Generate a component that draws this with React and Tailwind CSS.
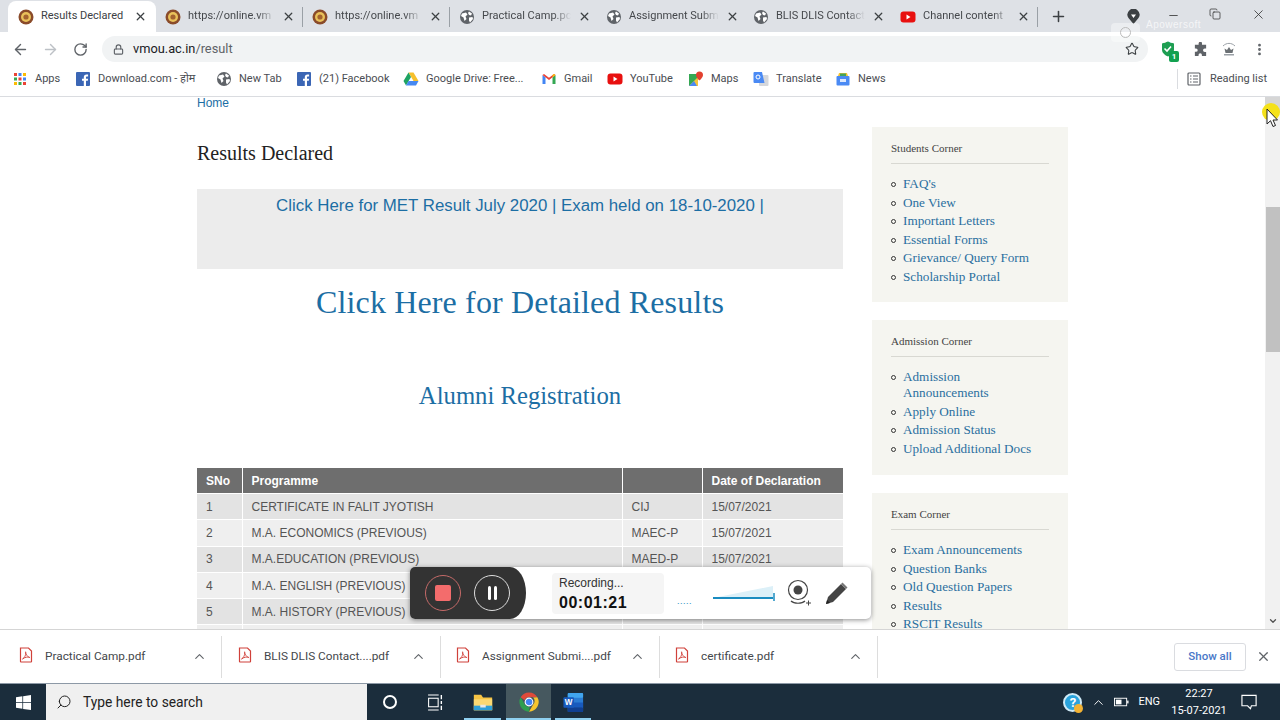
import { ArrowLeft, ArrowRight, RotateCw, Lock, Star, MoreVertical, X, Plus, Minus, ChevronUp, Search, Copy, ChevronDown } from "lucide-react";

const tabs = [
  { title: "Results Declared", icon: "seal", active: true },
  { title: "https://online.vm", icon: "seal" },
  { title: "https://online.vm", icon: "seal" },
  { title: "Practical Camp.pc", icon: "globe" },
  { title: "Assignment Subm", icon: "globe" },
  { title: "BLIS DLIS Contact", icon: "globe" },
  { title: "Channel content", icon: "yt" },
];

const bookmarks = [
  { label: "Download.com - होम", icon: "fb", w: "w-[141px]" },
  { label: "New Tab", icon: "globe", w: "w-[80px]" },
  { label: "(21) Facebook", icon: "fb", w: "w-[107px]" },
  { label: "Google Drive: Free...", icon: "drive", w: "w-[138px]" },
  { label: "Gmail", icon: "gmail", w: "w-[66px]" },
  { label: "YouTube", icon: "yt", w: "w-[81px]" },
  { label: "Maps", icon: "maps", w: "w-[65px]" },
  { label: "Translate", icon: "translate", w: "w-[82px]" },
  { label: "News", icon: "news", w: "w-[60px]" },
];

const rows = [
  ["1", "CERTIFICATE IN FALIT JYOTISH", "CIJ", "15/07/2021"],
  ["2", "M.A. ECONOMICS (PREVIOUS)", "MAEC-P", "15/07/2021"],
  ["3", "M.A.EDUCATION (PREVIOUS)", "MAED-P", "15/07/2021"],
  ["4", "M.A. ENGLISH (PREVIOUS)", "", ""],
  ["5", "M.A. HISTORY (PREVIOUS)", "", ""],
  ["", "", "", ""],
];

const corners = [
  { title: "Students Corner", h: "h-[175px]", links: ["FAQ's", "One View", "Important Letters", "Essential Forms", "Grievance/ Query Form", "Scholarship Portal"] },
  { title: "Admission Corner", h: "h-[155px]", links: ["Admission Announcements", "Apply Online", "Admission Status", "Upload Additional Docs"] },
  { title: "Exam Corner", h: "h-[180px]", links: ["Exam Announcements", "Question Banks", "Old Question Papers", "Results", "RSCIT Results"] },
];

const downloads = [
  { name: "Practical Camp.pdf", w: "w-[222px]", pl: "pl-[19px]" },
  { name: "BLIS DLIS Contact....pdf", w: "w-[219px]", pl: "pl-[16px]" },
  { name: "Assignment Submi....pdf", w: "w-[219px]", pl: "pl-[15px]" },
  { name: "certificate.pdf", w: "w-[218px]", pl: "pl-[15px]" },
];

const SiteIcon = ({ type }) => {
  if (type === "seal")
    return (
      <svg viewBox="0 0 16 16" className="w-4 h-4 shrink-0">
        <circle cx="8" cy="8" r="7.5" fill="#8a4b2a" />
        <circle cx="8" cy="8" r="5" fill="#e9c15a" />
        <circle cx="8" cy="8" r="2.6" fill="#a4632f" />
      </svg>
    );
  if (type === "globe")
    return (
      <svg viewBox="0 0 16 16" className="w-4 h-4 shrink-0">
        <circle cx="8" cy="8" r="7" fill="#5f6368" />
        <path d="M3 4.500 7 3.500 8.500 5.500 6.500 7.500 7.500 10 5.500 12 4.500 8.500 2 7zM10 2.500l3 2-1 2-2-.5-1-2zM10 8.500l3.500-.5.5 2-3 3.500-1-2z" fill="#fff" />
      </svg>
    );
  if (type === "yt")
    return (
      <svg viewBox="0 0 16 16" className="w-4 h-4 shrink-0">
        <rect x="0.5" y="2.5" width="15" height="11" rx="3" fill="#e8100f" />
        <path d="M6.5 5.5 10.5 8l-4 2.500z" fill="#fff" />
      </svg>
    );
  if (type === "fb")
    return (
      <svg viewBox="0 0 16 16" className="w-4 h-4 shrink-0">
        <rect x="1" y="1" width="14" height="14" rx="1" fill="#3b66b5" />
        <path d="M11 15V9.800h1.800l.3-2.100H11V6.400c0-.6.2-1 1-1h1.100V3.500c-.2 0-.9-.1-1.600-.1-1.600 0-2.700 1-2.700 2.800v1.500H7v2.100h1.800V15z" fill="#fff" />
      </svg>
    );
  if (type === "drive")
    return (
      <svg viewBox="0 0 16 16" className="w-4 h-4 shrink-0">
        <path d="M5.500 1.500h5L15.500 10h-5z" fill="#f6c02c" />
        <path d="M5.500 1.500 0.500 10l2.500 4.500L8 6z" fill="#1ea362" />
        <path d="M3 14.500h10l2.500-4.500h-10z" fill="#4688f1" />
      </svg>
    );
  if (type === "gmail")
    return (
      <svg viewBox="0 0 16 16" className="w-4 h-4 shrink-0">
        <path d="M1.500 13V4l3 2.300V13z" fill="#4285f4" />
        <path d="M11.500 13V6.300l3-2.300v9z" fill="#34a853" />
        <path d="M1.500 4 8 9l6.500-5-1.500-1-5 3.800L3 3z" fill="#ea4335" />
        <path d="M11.500 6.300 14.500 4l-1.500-1-1.500 1.100z" fill="#fbbc04" />
      </svg>
    );
  if (type === "maps")
    return (
      <svg viewBox="0 0 16 16" className="w-4 h-4 shrink-0">
        <path d="M1 3h9v12H1z" fill="#35a853" />
        <path d="M1 15 10 6v9z" fill="#f5c33b" />
        <path d="M1 15 6 10l3 5z" fill="#4a8af4" />
        <path d="M11.500 0.500a3.500 3.500 0 0 1 3.500 3.500c0 2.500-3.500 5.500-3.500 5.500S8 6.500 8 4a3.500 3.500 0 0 1 3.500-3.500z" fill="#e2402f" />
      </svg>
    );
  if (type === "translate")
    return (
      <svg viewBox="0 0 16 16" className="w-4 h-4 shrink-0">
        <rect x="6" y="4" width="9.500" height="11" rx="1" fill="#d5d7db" />
        <path d="M1.500 1h7.500l2.500 11h-10a1 1 0 0 1-1-1V2a1 1 0 0 1 1-1z" fill="#4a8af4" />
        <circle cx="5" cy="6" r="2" fill="none" stroke="#fff" strokeWidth="1" />
      </svg>
    );
  return (
    <svg viewBox="0 0 16 16" className="w-4 h-4 shrink-0">
      <rect x="1.500" y="5" width="13" height="9.500" rx="1" fill="#4a8af4" />
      <path d="M3 5 4 2h8l1 3z" fill="#f4c430" />
      <path d="M5 2.500h6V5H5z" fill="#43a35c" />
      <rect x="5" y="8" width="6" height="3" fill="#fff" opacity="0.8" />
    </svg>
  );
};

const AppsIcon = () => (
  <svg viewBox="0 0 14 14" className="w-[14px] h-[14px]">
    {[1, 5.5, 10].map((y, r) =>
      [1, 5.5, 10].map((x, c) => (
        <rect key={`${r}-${c}`} x={x} y={y} width="3" height="3" fill={["#ea4335", "#4285f4", "#fbbc04", "#34a853"][(r * 3 + c) % 4]} />
      ))
    )}
  </svg>
);

const PdfIcon = () => (
  <svg viewBox="0 0 14 16" className="w-[14px] h-4 shrink-0 -mt-[3px]">
    <path d="M1.500 1h8l3 3v10.500a.5.5 0 0 1-.5.500H2a.5.5 0 0 1-.5-.500z" fill="#fff" stroke="#d0413a" strokeWidth="1.200" />
    <path d="M3.500 12c2-1 3.500-4 3.300-6.500C6.700 4 6 5 7 7c1 1.800 2.500 3.500 3.800 3.500C10 9.500 6 10 3.500 12z" fill="none" stroke="#d0413a" strokeWidth="0.900" />
  </svg>
);

const ChromeIcon = () => (
  <svg viewBox="0 0 24 24" className="w-[22px] h-[22px]">
    <path d="M12 1.500a10.500 10.500 0 0 1 9.100 5.250H12A5.250 5.250 0 0 0 7.200 10L2.900 6.800A10.500 10.500 0 0 1 12 1.500z" fill="#e04a3a" />
    <path d="M21.100 6.750A10.500 10.500 0 0 1 12 22.500l4.500-7.900A5.250 5.250 0 0 0 16.500 7z" fill="#f7c52d" />
    <path d="M12 22.500A10.500 10.500 0 0 1 2.900 6.800l4.500 7.900a5.250 5.250 0 0 0 5.200 2.500z" fill="#2f9e4f" />
    <circle cx="12" cy="12" r="4.200" fill="#4285f4" stroke="#fff" strokeWidth="1.200" />
  </svg>
);

const WordIcon = () => (
  <svg viewBox="0 0 24 24" className="w-[23px] h-[23px]">
    <rect x="6" y="2" width="16" height="20" rx="1" fill="#2b7cd3" />
    <rect x="6" y="2" width="16" height="5" rx="1" fill="#41a5ee" />
    <rect x="6" y="12" width="16" height="5" fill="#185abd" />
    <rect x="6" y="17" width="16" height="5" rx="1" fill="#103f91" />
    <rect x="1.500" y="6.500" width="11" height="11" rx="1" fill="#185abd" />
    <text x="7" y="15" textAnchor="middle" fontSize="8.5" fontWeight="700" fill="#fff" fontFamily="Liberation Sans, sans-serif">W</text>
  </svg>
);

const FolderIcon = () => (
  <svg viewBox="0 0 24 24" className="w-[22px] h-[22px]">
    <path d="M2 4h8l2 3h10v14H2z" fill="#f6c445" />
    <path d="M2 9h20v12H2z" fill="#fbd872" />
    <rect x="2" y="16" width="20" height="5" fill="#2f9fd8" />
    <rect x="9" y="15" width="6" height="3" fill="#e8e8e8" />
  </svg>
);

function Tab({ tab }) {
  if (tab.active) {
    return (
      <div className="relative w-[148px] h-[31px] bg-white rounded-t-lg flex items-center pl-[10px] pr-[9px] gap-[7px]">
        <SiteIcon type={tab.icon} />
        <span className="flex-1 whitespace-nowrap text-[11px] text-[#3c4043]">{tab.title}</span>
        <X size={13} strokeWidth={2.4} className="text-[#3c4043] shrink-0" />
      </div>
    );
  }
  return (
    <div className="w-[147px] h-[31px] flex items-center pl-[9px] pr-[11px] gap-[7px]">
      <SiteIcon type={tab.icon} />
      <span className="flex-1 whitespace-nowrap text-[11px] text-[#45484c] [mask-image:linear-gradient(to_right,black_80%,transparent)]">{tab.title}</span>
      <X size={13} strokeWidth={2.4} className="text-[#3c4043] shrink-0" />
      <span className="block w-px h-5 bg-[#9aa0a6] -mr-[11px]" />
    </div>
  );
}

function TopBars() {
  return (
    <div className="shrink-0 font-['Roboto',sans-serif]">
      {/* tab strip */}
      <div className="relative h-8 bg-[#dee1e6] flex items-end pl-2">
        {tabs.map((tab, i) => (
          <Tab key={i} tab={tab} />
        ))}
        <Plus size={17} strokeWidth={2.2} className="text-[#3c4043] ml-[12px] mb-[7px]" />
        <div className="flex-1" />
        <svg viewBox="0 0 14 16" className="w-[15px] h-[16px] mb-[7px] mr-[26px]">
          <path d="M7 15 2 9a6 6 0 1 1 10 0z" fill="#3c4043" />
          <path d="M4.500 5.500h5L7 9z" fill="#fff" />
        </svg>
        <Minus size={13} strokeWidth={1.5} className="text-[#333] mb-[10px] mr-[29px]" />
        <Copy size={12} strokeWidth={1.5} className="text-[#333] mb-[12px] mr-[30px]" />
        <X size={15} strokeWidth={1.3} className="text-[#333] mb-[10px] mr-[14px]" />
      </div>

      {/* toolbar */}
      <div className="h-[33px] pt-px bg-white flex items-center pl-[12px]">
        <ArrowLeft size={17} strokeWidth={2} className="text-[#5f6368]" />
        <ArrowRight size={17} strokeWidth={2} className="text-[#bdc1c6] ml-[13px]" />
        <RotateCw size={15} strokeWidth={2.2} className="text-[#5f6368] ml-[14px]" />
        <div className="ml-[14px] w-[1046px] h-[26px] rounded-full bg-[#f1f3f4] flex items-center pl-[11px] pr-[9px]">
          <Lock size={11} strokeWidth={2.5} className="text-[#5f6368]" />
          <span className="ml-[9px] text-[12.8px] text-[#202124]">vmou.ac.in</span>
          <span className="text-[12.8px] text-[#5f6368]">/result</span>
          <div className="flex-1" />
          <Star size={14} strokeWidth={1.8} className="text-[#3c4043]" />
        </div>
        <div className="relative ml-[12px] w-4 h-4">
          <svg viewBox="0 0 16 16" className="w-4 h-4">
            <path d="M8 0.500 14 2.500v6c0 3.500-3 5.800-6 7-3-1.200-6-3.500-6-7v-6z" fill="#1e9e52" />
            <path d="M4.500 7.500 7 10l4-4.500" fill="none" stroke="#fff" strokeWidth="1.600" />
          </svg>
          <span className="absolute -right-[3px] -bottom-[5px] w-[10px] h-[11px] bg-[#12a150] rounded-[2px] text-white text-[8px] font-bold leading-[11px] text-center">1</span>
        </div>
        <svg viewBox="0 0 16 16" className="ml-[17px] w-[15px] h-[15px]">
          <path d="M6 1.500a1.800 1.800 0 0 1 3.600 0V3H14v4h-1.500a1.800 1.800 0 0 0 0 3.600H14V15H9.500v-1.200a1.800 1.800 0 0 0-3.600 0V15H2v-4.500h1.200a1.800 1.800 0 0 0 0-3.600H2V3h4z" fill="#5f6368" />
        </svg>
        <svg viewBox="0 0 16 16" className="ml-[13px] w-4 h-4">
          <path d="M2 5c3.500-3.500 8.500-3.500 12 0" fill="none" stroke="#9aa0a6" strokeWidth="1" />
          <path d="M3.500 7.500 6 9l2-3 2 3 2.500-1.500L11.500 12h-7z" fill="#6b7074" />
          <rect x="3" y="13" width="10" height="1.500" fill="#9aa0a6" />
        </svg>
        <MoreVertical size={15} strokeWidth={2.5} className="ml-[15px] text-[#5f6368]" />
      </div>

      {/* bookmarks bar */}
      <div className="h-[32px] pb-[3px] bg-white border-b border-[#dadce0] flex items-center pl-[13px] text-[11px] text-[#4a4d52]">
        <div className="flex items-center gap-[8px] w-[62px]">
          <AppsIcon />
          <span>Apps</span>
        </div>
        {bookmarks.map((b) => (
          <div key={b.label} className={`flex items-center gap-[7px] shrink-0 ${b.w}`}>
            <SiteIcon type={b.icon} />
            <span className="whitespace-nowrap font-['Roboto','Noto_Sans',sans-serif]">{b.label}</span>
          </div>
        ))}
        <div className="flex-1" />
        <span className="block w-px h-5 bg-[#dadce0] mr-[9px]" />
        <svg viewBox="0 0 14 14" className="w-[14px] h-[14px]">
          <rect x="1" y="1" width="12" height="12" rx="1" fill="none" stroke="#5f6368" strokeWidth="1.200" />
          <path d="M3 4h1.500M3 7h1.500M3 10h1.500M6 4h5M6 7h5M6 10h5" stroke="#5f6368" strokeWidth="1.100" />
        </svg>
        <span className="ml-[9px] mr-[13px] whitespace-nowrap">Reading list</span>
      </div>
    </div>
  );
}

function MainColumn() {
  return (
    <div className="w-[646px] shrink-0">
      <a className="block h-[12px] text-[12px] leading-[12px] text-[#1c6ea4] font-['Liberation_Sans',sans-serif]">Home</a>
      <h1 className="mt-[32px] text-[20px] leading-[24px] text-[#222] font-['Liberation_Serif',serif]">Results Declared</h1>
      <div className="mt-[24px] h-[80px] bg-[#ececec] pt-[7px] text-center text-[16.85px] leading-5 text-[#1c6ea4] font-['Liberation_Sans',sans-serif]">
        Click Here for MET Result July 2020 | Exam held on 18-10-2020 |
      </div>
      <h2 className="mt-[14px] text-center text-[32px] leading-[38px] tracking-[0.15px] text-[#1c6ea4] font-['Liberation_Serif',serif]">Click Here for Detailed Results</h2>
      <h3 className="mt-[60px] text-center text-[24.7px] leading-[30px] text-[#1c6ea4] font-['Liberation_Serif',serif]">Alumni Registration</h3>
      <table className="mt-[57px] w-full table-fixed border-collapse text-[12px] font-['Liberation_Sans',sans-serif]">
        <thead>
          <tr className="h-[25.5px] bg-[#6e6e6e] text-white text-left font-bold">
            <th className="w-[45px] pl-[9px] border-r border-white">SNo</th>
            <th className="w-[380px] pl-[9px] border-r border-white">Programme</th>
            <th className="w-[80px] pl-[9px] border-r border-white"></th>
            <th className="pl-[9px]">Date of Declaration</th>
          </tr>
        </thead>
        <tbody className="text-[#555]">
          {rows.map((row, i) => (
            <tr key={i} className={`h-[26.3px] border-t border-white ${i % 2 === 0 ? "bg-[#e3e3e3]" : "bg-[#efefef]"}`}>
              {row.map((cell, j) => (
                <td key={j} className={`pl-[9px] ${j < 3 ? "border-r border-white" : ""}`}>{cell}</td>
              ))}
            </tr>
          ))}
        </tbody>
      </table>
    </div>
  );
}

function Sidebar() {
  return (
    <div className="w-[196px] shrink-0 ml-[29px] pt-[30px] flex flex-col gap-[18px] font-['Liberation_Serif',serif]">
      {corners.map((c) => (
        <div key={c.title} className={`${c.h} shrink-0 bg-[#f5f5f0] pt-[15px] px-[19px]`}>
          <div className="text-[11px] leading-[13px] text-[#444] pb-[8px] border-b border-[#d8d8d2]">{c.title}</div>
          <ul className="mt-[12px] list-none pr-[10px]">
            {c.links.map((l) => (
              <li key={l} className="relative pl-[12px] text-[13.2px] leading-[16px] mb-[2.5px] text-[#2a6f9f]">
                <span className="absolute left-0 top-[6px] w-[5px] h-[5px] rounded-full border border-[#333]" />
                {l}
              </li>
            ))}
          </ul>
        </div>
      ))}
    </div>
  );
}

function Scrollbar() {
  return (
    <div className="w-[15px] shrink-0 bg-[#f1f1f1] flex flex-col items-center">
      <div className="w-[15px] h-[16px] shrink-0 bg-[#d6d6d6]" />
      <div className="h-[94px] shrink-0" />
      <div className="w-[14px] h-[145px] shrink-0 bg-[#c1c1c1]" />
      <div className="flex-1" />
      <ChevronDown size={10} strokeWidth={3} className="text-[#505050] mb-[3px]" />
    </div>
  );
}

function Recorder() {
  return (
    <div className="absolute left-[410px] top-[470px] w-[461px] h-[52px] bg-white rounded-[5px] shadow-[0_1px_5px_rgba(0,0,0,0.45)] flex items-center font-['Liberation_Sans',sans-serif]">
      <div className="w-[116px] h-[52px] shrink-0 bg-[#333333] rounded-l-[5px] rounded-r-[16px_26px] flex items-center pl-[15px] gap-[13px]">
        <div className="w-9 h-9 rounded-full border border-[#c46a68] flex items-center justify-center">
          <span className="block w-4 h-4 rounded-[2px] bg-[#f36c6c]" />
        </div>
        <div className="w-9 h-9 rounded-full border border-[#ddd] flex items-center justify-center gap-[3px]">
          <span className="block w-[3px] h-[14px] rounded-sm bg-white" />
          <span className="block w-[3px] h-[14px] rounded-sm bg-white" />
        </div>
      </div>
      <div className="ml-[26px] w-[112px] h-[41px] rounded-[4px] bg-[#f5f5f5] pl-[7px] pt-[3px]">
        <div className="text-[12px] leading-[15px] text-[#333]">Recording...</div>
        <div className="text-[16px] leading-[20px] mt-[2px] font-bold tracking-[0.5px] text-[#111]">00:01:21</div>
      </div>
      <span className="ml-[13px] mt-[17px] w-[18px] text-[9px] leading-[9px] tracking-[0.5px] text-[#2a8fc0]">.....</span>
      <svg viewBox="0 0 64 16" className="ml-[17px] w-[64px] h-4 mt-[-1px]">
        <path d="M1 13 61 1v12z" fill="#dcf0f8" />
        <path d="M1 13h60" stroke="#1a8cc0" strokeWidth="2" />
        <path d="M62 8v10" stroke="#1a8cc0" strokeWidth="1.500" />
      </svg>
      <svg viewBox="0 0 24 28" className="ml-[11px] w-[24px] h-[28px]">
        <circle cx="11" cy="11" r="9.500" fill="#fff" stroke="#444" strokeWidth="1.200" />
        <circle cx="11" cy="11" r="4.500" fill="#444" />
        <path d="M4 22c3 3 11 3 14 0" fill="none" stroke="#444" strokeWidth="1.200" />
        <path d="M19 24h5M21.500 21.500v5" stroke="#444" strokeWidth="1" />
      </svg>
      <svg viewBox="0 0 24 24" className="ml-[14px] w-[24px] h-[24px]">
        <path d="M1 23l2-7L16 3l5 5L8 21z" fill="#444" />
        <path d="M17.500 1.500l5 5-1.500 1.500-5-5z" fill="#777" />
        <path d="M1 23l1-4 3 3z" fill="#222" />
      </svg>
    </div>
  );
}

function Downloads() {
  return (
    <div className="h-[54px] shrink-0 bg-white border-t border-[#d5d5d5] flex items-center font-['Roboto',sans-serif] text-[11.8px] text-[#44474b]">
      {downloads.map((d) => (
        <div key={d.name} className={`${d.w} ${d.pl} h-[42px] shrink-0 flex items-center border-r border-[#dddddd]`}>
          <PdfIcon />
          <span className="ml-[12px] whitespace-nowrap">{d.name}</span>
          <div className="flex-1" />
          <ChevronUp size={15} strokeWidth={1.8} className="text-[#5f6368] mr-[14px]" />
        </div>
      ))}
      <div className="flex-1" />
      <div className="w-[72px] h-[28px] rounded-[3px] border border-[#dadce0] flex items-center justify-center text-[11.5px] font-medium text-[#4a78c8]">Show all</div>
      <X size={15} strokeWidth={2} className="text-[#5f6368] ml-[10px] mr-[9px]" />
    </div>
  );
}

function Taskbar() {
  return (
    <div className="h-[37px] shrink-0 bg-[#1b2d3c] border-t border-[#8d99a6] flex items-center font-['Roboto',sans-serif] text-white">
      <div className="w-[46px] flex justify-center">
        <svg viewBox="0 0 16 16" className="w-[15px] h-[15px]">
          <path d="M0 2.300 6.800 1.300v6.200H0zM7.600 1.200 16 0v7.500H7.600zM0 8.300h6.800v6.400L0 13.700zM7.600 8.300H16V16l-8.400-1.200z" fill="#fff" />
        </svg>
      </div>
      <div className="w-[321px] h-[36px] bg-[#f0f0f0] flex items-center pl-[10px] text-[#222]">
        <Search size={16} strokeWidth={1.5} className="-scale-x-100" />
        <span className="ml-[11px] text-[13.8px] whitespace-nowrap">Type here to search</span>
      </div>
      <span className="ml-[16px] w-[14px] h-[14px] rounded-full border-2 border-white" />
      <svg viewBox="0 0 16 16" className="ml-[30px] w-[17px] h-[17px]">
        <path d="M1 1h10M1 15h10" stroke="#fff" strokeWidth="1" />
        <rect x="1.500" y="4" width="9" height="8" fill="none" stroke="#fff" strokeWidth="1" />
        <path d="M13.500 1v4M13.500 6.500v3M13.500 11v4" stroke="#fff" strokeWidth="1.300" />
      </svg>
      <div className="ml-[20px] w-[37px] h-[36px] relative flex items-center justify-center">
        <FolderIcon />
        <span className="absolute bottom-0 left-0 right-0 h-[2px] bg-[#8fd0f0]" />
      </div>
      <div className="ml-[5px] w-[45px] h-[36px] relative bg-[#46585f] flex items-center justify-center">
        <ChromeIcon />
        <span className="absolute bottom-0 left-0 right-0 h-[2px] bg-[#8fd0f0]" />
      </div>
      <div className="ml-[4px] w-[36px] h-[36px] relative flex items-center justify-center">
        <WordIcon />
        <span className="absolute bottom-0 left-0 right-0 h-[2px] bg-[#8fd0f0]" />
      </div>
      <div className="flex-1" />
      <div className="relative w-[19px] h-[19px] rounded-full bg-[#2aa3dc] border-2 border-[#cfeaf7] flex items-center justify-center text-[13px] font-bold leading-none">
        ?
        <span className="absolute -right-[3px] -bottom-[3px] w-[9px] h-[9px] rounded-full bg-[#f2b233]" />
      </div>
      <ChevronUp size={15} strokeWidth={1.5} className="ml-[9px]" />
      <svg viewBox="0 0 16 10" className="ml-[8px] w-[15px] h-[10px]">
        <rect x="0.500" y="1" width="13" height="8" fill="none" stroke="#fff" strokeWidth="1" />
        <rect x="2" y="2.500" width="6" height="5" fill="#fff" />
        <rect x="14" y="3.500" width="1.500" height="3" fill="#fff" />
      </svg>
      <span className="ml-[9px] text-[11px]">ENG</span>
      <div className="ml-[9px] w-[60px] text-center text-[11px] leading-[17px] whitespace-nowrap">
        <div>22:27</div>
        <div>15-07-2021</div>
      </div>
      <svg viewBox="0 0 18 18" className="ml-[12px] mr-[22px] w-[17px] h-[17px]">
        <path d="M1 1.500h15v11h-5l-1 3-3-3H1z" fill="none" stroke="#fff" strokeWidth="1.200" />
      </svg>
    </div>
  );
}

export default function App() {
  return (
    <div className="relative w-[1280px] h-[720px] overflow-hidden flex flex-col bg-white">
      <TopBars />

      {/* page area */}
      <div className="relative h-[532px] shrink-0 flex overflow-hidden">
        <div className="flex-1 flex pl-[197px] overflow-hidden">
          <MainColumn />
          <Sidebar />
        </div>
        <Scrollbar />
        <Recorder />
        {/* mouse highlight */}
        <span className="absolute left-[1262px] top-[6px] w-[18px] h-[18px] rounded-full bg-[#f4e11a]" />
        <svg viewBox="0 0 12 20" className="absolute left-[1266px] top-[11px] w-[12px] h-[20px]">
          <path d="M1 1v15l3.500-3.300L7 18.500l2.500-1L7 12h4.500z" fill="#fff" stroke="#222" strokeWidth="1" />
        </svg>
      </div>

      <Downloads />
      <Taskbar />

      {/* screen recorder watermark */}
      <div className="absolute left-[1111px] top-[20px] flex items-center gap-[6px] text-white/70 font-['Liberation_Sans',sans-serif] pointer-events-none">
        <span className="w-[29px] h-[19px] rounded-[4px] bg-white/40 flex items-center justify-center">
          <span className="w-[11px] h-[11px] rounded-full border border-[#bbb]" />
        </span>
        <div className="leading-none">
          <div className="text-[10px] tracking-[0.5px]">Apowersoft</div>
          <div className="text-[14px] mt-[1px] tracking-[0.3px]">Screen Recorder</div>
        </div>
      </div>
    </div>
  );
}
